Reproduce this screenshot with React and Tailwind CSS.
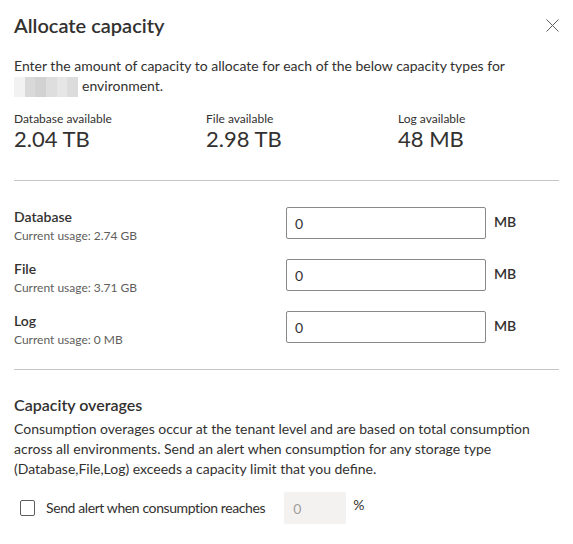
import React from 'react';

const font = { fontFamily: '"Segoe UI", Lato, "Noto Sans", sans-serif' };

const stats = [
  { label: 'Database available', value: '2.04 TB' },
  { label: 'File available', value: '2.98 TB' },
  { label: 'Log available', value: '48 MB' },
];

const rows = [
  { name: 'Database', usage: 'Current usage: 2.74 GB' },
  { name: 'File', usage: 'Current usage: 3.71 GB' },
  { name: 'Log', usage: 'Current usage: 0 MB' },
];

// blurred environment name
const Blur = () => (
  <span className="inline-flex h-[20px] w-[64px] mr-[4px] align-middle">
    <span className="flex-1 bg-[#f2f2f2]" />
    <span className="flex-1 bg-[#d9d9d9]" />
    <span className="flex-1 bg-[#d2d2d2]" />
    <span className="flex-1 bg-[#dedede]" />
    <span className="flex-1 bg-[#e6e6e6]" />
    <span className="flex-1 bg-[#dcdcdc]" />
  </span>
);

export default function App() {
  return (
    <div className="w-[573px] h-[544px] bg-white text-[#323130] overflow-hidden" style={font}>
      <div className="flex items-start justify-between px-[14px] pt-[11px]">
        <h1 className="text-[20px] leading-[28px] font-semibold">Allocate capacity</h1>
        <svg width="13" height="13" viewBox="0 0 13 13" className="mt-[8px]">
          <path d="M0.5 0.5 L12.5 12.5 M12.5 0.5 L0.5 12.5" stroke="#605e5c" strokeWidth="1" />
        </svg>
      </div>

      <p className="px-[14px] mt-[17px] text-[14px] leading-[20px]">
        Enter the amount of capacity to allocate for each of the below capacity types for
        <br />
        <Blur />
        environment.
      </p>

      <div className="grid grid-cols-[192px_192px_1fr] px-[14px] mt-[14px]">
        {stats.map((s) => (
          <div key={s.label}>
            <div className="text-[12px] leading-[16px]">{s.label}</div>
            <div className="text-[22px] leading-[24px]">{s.value}</div>
          </div>
        ))}
      </div>

      <div className="mx-[14px] mt-[29px] border-t border-[#c8c6c4]" />

      <div className="flex flex-col mt-[26px] px-[14px]">
        {rows.map((r) => (
          <div key={r.name} className="flex items-start h-[52px]">
            <div className="w-[272px]">
              <div className="text-[14px] leading-[20px] font-semibold">{r.name}</div>
              <div className="text-[12px] leading-[16px] text-[#605e5c] mt-[1px]">{r.usage}</div>
            </div>
            <input
              readOnly
              value="0"
              className="w-[200px] h-[32px] border border-[#8a8886] rounded-[2px] px-[8px] text-[14px] outline-none"
              style={font}
            />
            <span className="ml-[8px] mt-[5px] text-[14px] leading-[20px] font-semibold">MB</span>
          </div>
        ))}
      </div>

      <div className="mx-[14px] mt-[6px] border-t border-[#c8c6c4]" />

      <div className="px-[14px] mt-[24px]">
        <h2 className="text-[16px] leading-[22px] font-semibold">Capacity overages</h2>
        <p className="text-[14px] leading-[20px] mt-[3px]">
          Consumption overages occur at the tenant level and are based on total consumption
          across all environments. Send an alert when consumption for any storage type
          (Database,File,Log) exceeds a capacity limit that you define.
        </p>
      </div>

      <div className="flex items-center mt-[13px] pl-[20px]">
        <span className="w-[15px] h-[16px] border border-[#605e5c] rounded-[2px] bg-white" />
        <span className="ml-[11px] text-[14px] leading-[20px] tracking-[-0.4px]">
          Send alert when consumption reaches
        </span>
        <input
          readOnly
          disabled
          value="0"
          className="ml-[19px] w-[62px] h-[32px] bg-[#f3f2f1] rounded-[2px] px-[9px] text-[14px] text-[#a19f9d] outline-none"
          style={font}
        />
        <span className="ml-[7px] text-[14px] leading-[20px] -mt-[6px]">%</span>
      </div>
    </div>
  );
}
